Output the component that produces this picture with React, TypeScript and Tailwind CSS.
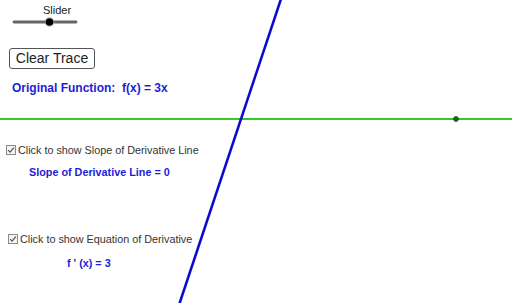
import React from "react";

const BLUE = "#1d1dd8";

const CheckBox: React.FC = () => (
  <svg width="10" height="10" viewBox="0 0 10 10" className="shrink-0">
    <rect x="0.5" y="0.5" width="9" height="9" fill="#f4f4f4" stroke="#8a8a8a" />
    <path d="M2.2 5.2 L4.1 7.2 L7.9 2.6" fill="none" stroke="#555" strokeWidth="1.2" />
  </svg>
);

const App: React.FC = () => {
  // f(x) = 3x drawn in screen coords, crosses axis at (241, 119)
  const xAt = (y: number) => 241 - (y - 119) / 3;

  return (
    <div className="relative w-[512px] h-[303px] overflow-hidden bg-white font-['Liberation_Sans',Arial,sans-serif] text-[#333]">
      {/* graphics layer */}
      <svg className="absolute inset-0" width="512" height="303" viewBox="0 0 512 303">
        <line x1="0" y1="119" x2="512" y2="119" stroke="#2fcb2f" strokeWidth="2" />
        <line x1={xAt(-5)} y1="-5" x2={xAt(308)} y2="308" stroke="#0a0ad0" strokeWidth="2.6" />
        <circle cx="456" cy="119" r="2.4" fill="#1e6b1e" stroke="#0d3d0d" strokeWidth="0.8" />
      </svg>

      <div className="relative flex flex-col items-start">
        {/* slider */}
        <div className="ml-[43px] mt-[4px] text-[11px] leading-[12px] text-[#222]">Slider</div>
        <svg width="70" height="12" viewBox="0 0 70 12" className="ml-[10px]">
          <line x1="4" y1="6" x2="66" y2="6" stroke="#666" strokeWidth="2.8" strokeLinecap="round" />
          <circle cx="39.5" cy="6" r="5" fill="#aaa" opacity="0.5" />
          <circle cx="39.5" cy="6" r="3.8" fill="#000" />
        </svg>

        <button className="ml-[9px] mt-[20px] h-[21px] w-[86px] rounded-[3px] border border-[#555] bg-white text-[14px] leading-[19px] text-[#222]">
          Clear Trace
        </button>

        <div className="ml-[12px] mt-[12px] text-[12px] leading-[15px] font-bold" style={{ color: BLUE }}>
          Original Function:&nbsp; f(x) = 3x
        </div>

        <label className="ml-[6px] mt-[47px] flex h-[14px] items-center gap-[2px] text-[10.8px] leading-[14px]">
          <CheckBox />
          <span>Click to show Slope of Derivative Line</span>
        </label>

        <div className="ml-[29px] mt-[8px] text-[10.8px] leading-[14px] font-bold" style={{ color: BLUE }}>
          Slope of Derivative Line = 0
        </div>

        <label className="ml-[8px] mt-[53px] flex h-[14px] items-center gap-[2px] text-[10.8px] leading-[14px]">
          <CheckBox />
          <span>Click to show Equation of Derivative</span>
        </label>

        <div className="ml-[67px] mt-[10px] text-[10.8px] leading-[14px] font-bold" style={{ color: BLUE }}>
          f ' (x) = 3
        </div>
      </div>
    </div>
  );
};

export default App;
